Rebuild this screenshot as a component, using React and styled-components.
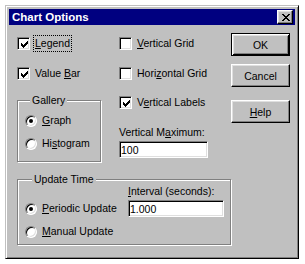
import React from 'react';
import styled, { createGlobalStyle, css } from 'styled-components';

const Global = createGlobalStyle`
  html, body { margin: 0; padding: 0; background: #fff; }
  body { font-family: "Liberation Sans", Arial, sans-serif; }
`;

const CHECK = [
  '......X',
  '.....XX',
  'X...XXX',
  'XX.XXX.',
  'XXXXX..',
  '.XXX...',
  '..X....',
];

const CLOSE = [
  'XX....XX',
  '.XX..XX.',
  '..XXXX..',
  '...XX...',
  '..XXXX..',
  '.XX..XX.',
  'XX....XX',
];

function Pixels({ rows, color = '#000' }) {
  const w = rows[0].length;
  const h = rows.length;
  return (
    <svg width={w} height={h} viewBox={`0 0 ${w} ${h}`} shapeRendering="crispEdges">
      {rows.flatMap((r, y) =>
        [...r].map((c, x) =>
          c === 'X' ? <rect key={`${x}-${y}`} x={x} y={y} width="1" height="1" fill={color} /> : null
        )
      )}
    </svg>
  );
}

const Page = styled.div`
  padding: 5px 0 0 5px;
`;

const Window = styled.div`
  box-sizing: border-box;
  width: 294px;
  height: 254px;
  background: #c0c0c0;
  border: 1px solid;
  border-color: #c0c0c0 #000 #000 #c0c0c0;
  box-shadow: inset 1px 1px 0 #fff, inset -1px -1px 0 #808080;
  padding: 3px;
  display: flex;
  flex-direction: column;
  font-family: "Liberation Sans", Arial, sans-serif;
  font-size: 10.5px;
  color: #000;
`;

const TitleBar = styled.div`
  height: 16px;
  background: #000080;
  display: flex;
  align-items: center;
  justify-content: space-between;
  padding: 0 2px 0 3px;
`;

const Title = styled.span`
  color: #fff;
  font-weight: bold;
  font-size: 11.5px;
  line-height: 14px;
`;

const CloseButton = styled.div`
  box-sizing: border-box;
  width: 16px;
  height: 14px;
  background: #c0c0c0;
  border: 1px solid;
  border-color: #fff #000 #000 #fff;
  box-shadow: inset -1px -1px 0 #808080, inset 1px 1px 0 #dfdfdf;
  display: flex;
  align-items: center;
  justify-content: center;
  padding-left: 1px;
`;

const Client = styled.div`
  flex: 1;
  padding: 0 0 0 8px;
  display: flex;
  flex-direction: column;
`;

const TopSection = styled.div`
  display: flex;
`;

const Column = styled.div`
  width: ${(p) => p.$width}px;
  padding-top: ${(p) => p.$pt}px;
  display: flex;
  flex-direction: column;
  align-items: flex-start;
`;

const Row = styled.div`
  height: 17px;
  display: flex;
  align-items: center;
  margin-top: ${(p) => p.$mt || 0}px;
`;

const CheckBox = styled.span`
  box-sizing: border-box;
  width: 13px;
  height: 13px;
  flex: none;
  background: #fff;
  border: 1px solid;
  border-color: #808080 #fff #fff #808080;
  box-shadow: inset 1px 1px 0 #000, inset -1px -1px 0 #dfdfdf;
  display: flex;
  align-items: center;
  justify-content: center;
  padding: 1px 0 0 1px;
`;

const Radio = styled.span`
  box-sizing: border-box;
  width: 12px;
  height: 12px;
  flex: none;
  border-radius: 50%;
  background: #fff;
  border: 1px solid;
  border-color: #808080 #fff #fff #808080;
  box-shadow: inset 1px 1px 0 #000, inset -1px -1px 0 #dfdfdf;
  display: flex;
  align-items: center;
  justify-content: center;
  &::after {
    content: '';
    width: 4px;
    height: 4px;
    border-radius: 50%;
    background: #000;
    display: ${(p) => (p.$checked ? 'block' : 'none')};
  }
`;

const Label = styled.span`
  margin-left: ${(p) => p.$gap ?? 3}px;
  padding: 1px 1px;
  border: 1px dotted ${(p) => (p.$focus ? '#000' : 'transparent')};
  line-height: 13px;
  white-space: nowrap;
`;

const GroupBox = styled.fieldset`
  box-sizing: border-box;
  margin: ${(p) => p.$mt}px 0 0 0;
  width: ${(p) => p.$width}px;
  min-width: 0;
  padding: ${(p) => p.$pt}px 0 ${(p) => p.$pb}px 7px;
  border: 1px solid #808080;
  box-shadow: 1px 1px 0 #fff, inset 1px 1px 0 #fff;
`;

const GroupLegend = styled.legend`
  margin-left: ${(p) => p.$indent}px;
  padding: 0 2px;
  line-height: 12px;
  font-size: 10.5px;
  background: #c0c0c0;
`;

const Caption = styled.div`
  line-height: 13px;
  margin-top: ${(p) => p.$mt || 0}px;
  white-space: nowrap;
  grid-area: ${(p) => p.$area || 'auto'};
`;

const Field = styled.input`
  box-sizing: border-box;
  width: ${(p) => p.$width}px;
  height: 17px;
  margin: ${(p) => p.$mt || 0}px 0 0 0;
  padding: 0 1px;
  background: #fff;
  border: 1px solid;
  border-color: #808080 #fff #fff #808080;
  box-shadow: inset 1px 1px 0 #000, inset -1px -1px 0 #dfdfdf;
  font-family: "Liberation Sans", Arial, sans-serif;
  font-size: 10.5px;
  color: #000;
  outline: none;
  grid-area: ${(p) => p.$area || 'auto'};
`;

const PushButton = styled.button`
  box-sizing: border-box;
  width: 59px;
  height: 23px;
  margin: ${(p) => p.$mt || 0}px 0 0 0;
  padding: 0;
  background: #c0c0c0;
  font-family: "Liberation Sans", Arial, sans-serif;
  font-size: 10.5px;
  color: #000;
  ${(p) =>
    p.$default
      ? css`
          border: 1px solid #000;
          box-shadow: inset 1px 1px 0 #fff, inset -1px -1px 0 #000, inset 2px 2px 0 #dfdfdf,
            inset -2px -2px 0 #808080;
        `
      : css`
          border: 1px solid;
          border-color: #fff #000 #000 #fff;
          box-shadow: inset -1px -1px 0 #808080, inset 1px 1px 0 #dfdfdf;
        `}
`;

const UpdateGrid = styled.div`
  display: grid;
  grid-template-columns: 103px 96px;
  grid-template-areas:
    '. label'
    'periodic edit'
    'manual .';
  align-items: center;
`;

const GridCell = styled.div`
  grid-area: ${(p) => p.$area};
  margin-top: ${(p) => p.$mt || 0}px;
`;

function Check({ checked, children, focus, mt }) {
  return (
    <Row $mt={mt}>
      <CheckBox>{checked && <Pixels rows={CHECK} />}</CheckBox>
      <Label $focus={focus}>{children}</Label>
    </Row>
  );
}

function Option({ checked, children, mt }) {
  return (
    <Row $mt={mt}>
      <Radio $checked={checked} />
      <Label $gap={3}>{children}</Label>
    </Row>
  );
}

export default function App() {
  return (
    <Page>
      <Global />
      <Window>
        <TitleBar>
          <Title>Chart Options</Title>
          <CloseButton>
            <Pixels rows={CLOSE} />
          </CloseButton>
        </TitleBar>
        <Client>
          <TopSection>
            <Column $width={102} $pt={10}>
              <Check checked focus>
                <u>L</u>egend
              </Check>
              <Check checked mt={13}>
                Value <u>B</u>ar
              </Check>
              <GroupBox $mt={12} $width={84} $pt={6} $pb={9}>
                <GroupLegend $indent={5}>Gallery</GroupLegend>
                <Option checked>
                  <u>G</u>raph
                </Option>
                <Option mt={6}>
                  Hi<u>s</u>togram
                </Option>
              </GroupBox>
            </Column>
            <Column $width={112} $pt={10}>
              <Check>
                <u>V</u>ertical Grid
              </Check>
              <Check mt={13}>
                Hori<u>z</u>ontal Grid
              </Check>
              <Check checked mt={12}>
                V<u>e</u>rtical Labels
              </Check>
              <Caption $mt={15}>
                Vertical M<u>a</u>ximum:
              </Caption>
              <Field $width={89} $mt={2} defaultValue="100" readOnly />
            </Column>
            <Column $width={59} $pt={8}>
              <PushButton $default>OK</PushButton>
              <PushButton $mt={8}>Cancel</PushButton>
              <PushButton $mt={13}>
                <u>H</u>elp
              </PushButton>
            </Column>
          </TopSection>
          <GroupBox $mt={11} $width={214} $pt={0} $pb={4}>
            <GroupLegend $indent={7}>Update Time</GroupLegend>
            <UpdateGrid>
              <Caption $area="label">
                <u>I</u>nterval (seconds):
              </Caption>
              <GridCell $area="periodic" $mt={2}>
                <Option checked>
                  <u>P</u>eriodic Update
                </Option>
              </GridCell>
              <Field $area="edit" $width={96} $mt={2} defaultValue="1.000" readOnly />
              <GridCell $area="manual" $mt={6}>
                <Option>
                  <u>M</u>anual Update
                </Option>
              </GridCell>
            </UpdateGrid>
          </GroupBox>
        </Client>
      </Window>
    </Page>
  );
}
